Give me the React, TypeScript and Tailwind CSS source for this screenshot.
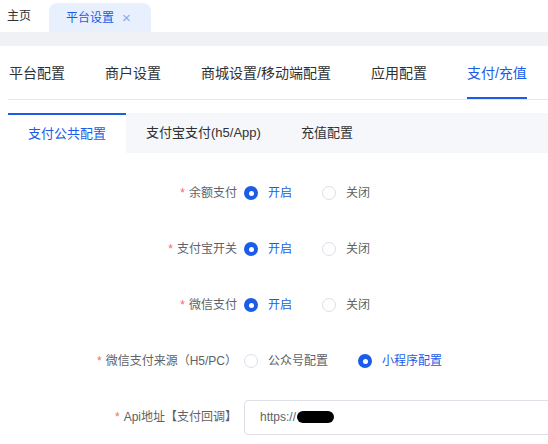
import { useState } from 'react';

const topTabs = ['平台配置', '商户设置', '商城设置/移动端配置', '应用配置', '支付/充值'];
const subTabs = ['支付公共配置', '支付宝支付(h5/App)', '充值配置'];

interface RadioProps {
  checked: boolean;
  label: string;
  onClick: () => void;
}

function Radio({ checked, label, onClick }: RadioProps) {
  return (
    <label className="flex items-center mr-[30px] cursor-pointer" onClick={onClick}>
      {checked ? (
        <span className="w-[14px] h-[14px] rounded-full bg-[#1b5ce8] flex items-center justify-center">
          <span className="w-[5px] h-[5px] rounded-full bg-white" />
        </span>
      ) : (
        <span className="w-[14px] h-[14px] rounded-full border border-[#dcdfe6] bg-white" />
      )}
      <span className={`pl-[10px] text-[12px] ${checked ? 'text-[#1b5ce8]' : 'text-[#606266]'}`}>{label}</span>
    </label>
  );
}

function FormRow({ label, children }: { label: string; children: React.ReactNode }) {
  return (
    <div className="flex items-center h-8 mb-6">
      <div className="w-[244px] shrink-0 flex justify-end pr-[7px] text-[12px] text-[#606266]">
        <span className="text-[#f56c6c] mr-1">*</span>
        {label}
      </div>
      <div className="flex items-center flex-1">{children}</div>
    </div>
  );
}

export default function App() {
  const [balance, setBalance] = useState(true);
  const [alipay, setAlipay] = useState(true);
  const [wechat, setWechat] = useState(true);
  const [source, setSource] = useState<'mp' | 'mini'>('mini');

  return (
    <div className="w-[548px] h-[444px] overflow-hidden bg-white font-['Liberation_Sans','Noto_Sans_CJK_SC',sans-serif]">
      {/* page tabs */}
      <div className="h-8 flex items-end">
        <div className="h-full flex items-center pl-[7px] pr-[18px] text-[12px] text-[#303133]">主页</div>
        <div className="h-[29px] w-[102px] rounded-t-[8px] bg-[#e8f0fd] flex items-center pl-[17px] text-[12px] text-[#1b5ce8]">
          平台设置
          <span className="ml-[8px] text-[15px] leading-none font-light text-[#8aa8ec]">×</span>
        </div>
      </div>
      <div className="h-[14px] bg-[#f0f1f4]" />

      {/* settings panel */}
      <div className="pl-2">
        <div className="flex border-b border-[#e4e7ed]">
          {topTabs.map((t, i) => (
            <div
              key={t}
              className={`relative h-[53px] pt-[2px] flex items-center text-[14px] ${i === 0 ? 'pl-px pr-5' : 'px-5'} ${
                i === topTabs.length - 1 ? 'text-[#1b5ce8]' : 'text-[#303133]'
              }`}
            >
              {t}
              {i === topTabs.length - 1 && (
                <span className="absolute left-5 right-5 bottom-0 h-[2px] bg-[#1b5ce8]" />
              )}
            </div>
          ))}
        </div>

        <div className="mt-[13px] h-10 flex bg-[#f5f7fa]">
          {subTabs.map((t, i) => (
            <div
              key={t}
              className={`px-5 flex items-center text-[13px] ${
                i === 0 ? 'bg-white text-[#1b5ce8] border-t-2 border-[#1b5ce8]' : 'text-[#303133]'
              }`}
            >
              {t}
            </div>
          ))}
        </div>
      </div>

      {/* form */}
      <div className="pt-[24px]">
        <FormRow label="余额支付">
          <Radio checked={balance} label="开启" onClick={() => setBalance(true)} />
          <Radio checked={!balance} label="关闭" onClick={() => setBalance(false)} />
        </FormRow>
        <FormRow label="支付宝开关">
          <Radio checked={alipay} label="开启" onClick={() => setAlipay(true)} />
          <Radio checked={!alipay} label="关闭" onClick={() => setAlipay(false)} />
        </FormRow>
        <FormRow label="微信支付">
          <Radio checked={wechat} label="开启" onClick={() => setWechat(true)} />
          <Radio checked={!wechat} label="关闭" onClick={() => setWechat(false)} />
        </FormRow>
        <FormRow label="微信支付来源（H5/PC）">
          <Radio checked={source === 'mp'} label="公众号配置" onClick={() => setSource('mp')} />
          <Radio checked={source === 'mini'} label="小程序配置" onClick={() => setSource('mini')} />
        </FormRow>
        <FormRow label="Api地址【支付回调】">
          <div className="h-[35px] w-[320px] shrink-0 border border-[#dcdfe6] rounded flex items-center pl-[15px] text-[12px] text-[#606266]">
            https://
            <span className="ml-px w-[37px] h-[12px] rounded-full bg-black" />
          </div>
        </FormRow>
      </div>
    </div>
  );
}
